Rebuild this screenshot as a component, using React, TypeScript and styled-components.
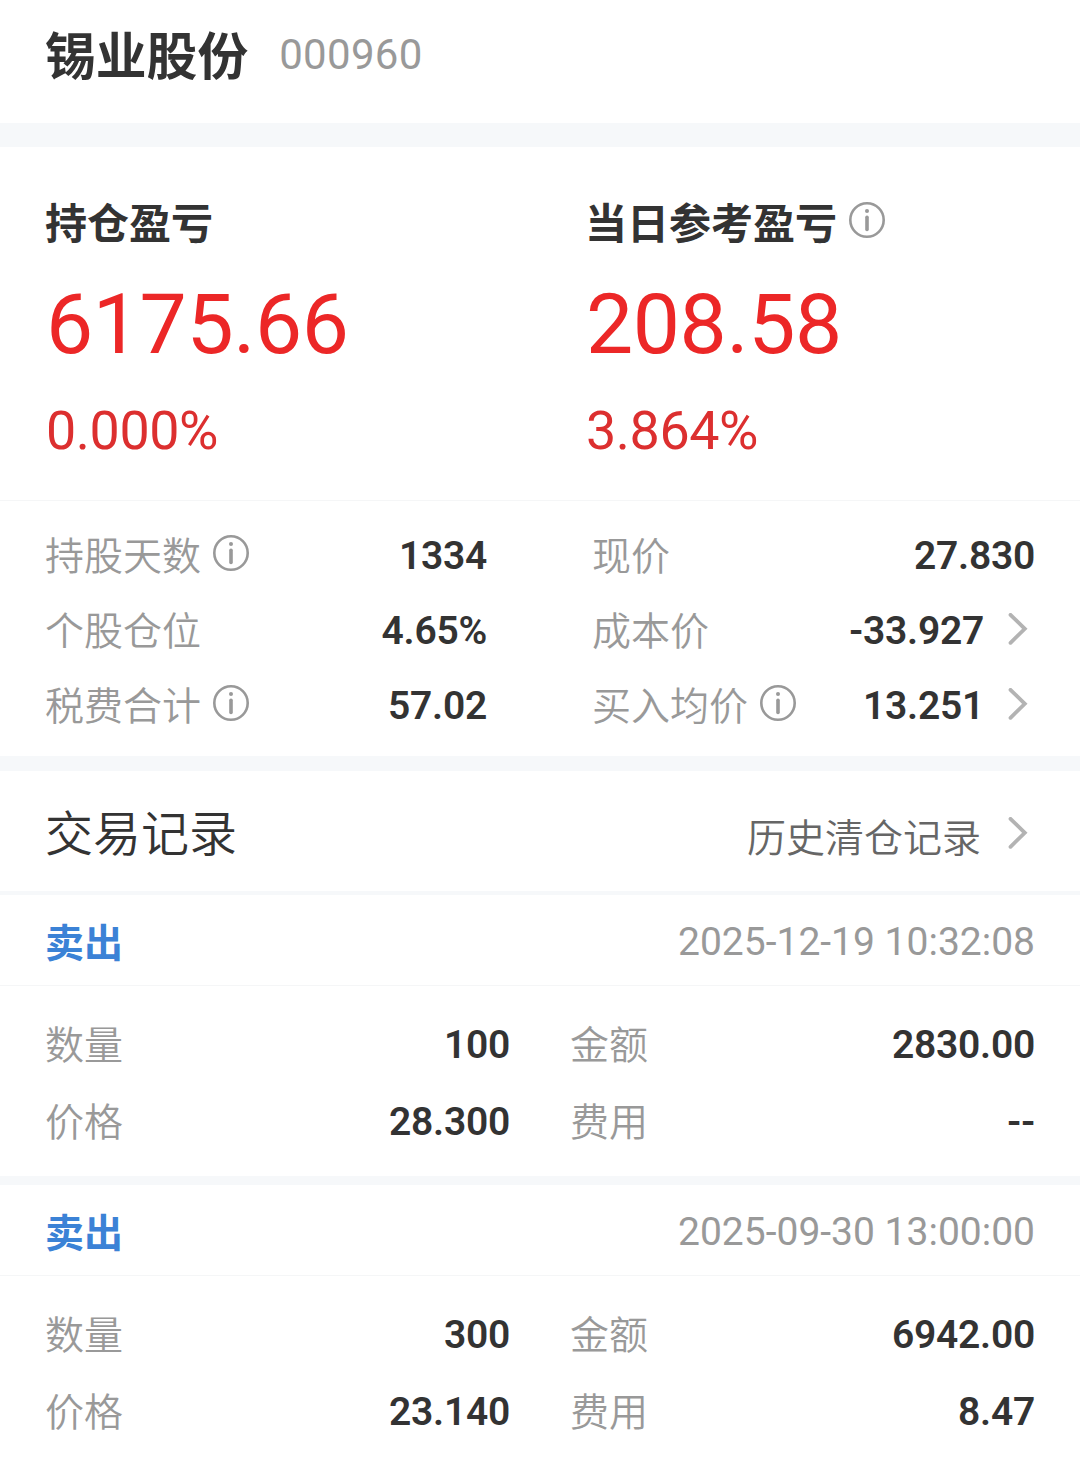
import React from 'react';
import styled, { createGlobalStyle } from 'styled-components';

const Global = createGlobalStyle`
  * { box-sizing: border-box; }
  body { margin: 0; background: #fff; font-family: Roboto, "Noto Sans CJK SC", sans-serif; color: #333; }
`;
const Page = styled.main`width: 1080px; height: 1464px; background: #fff; overflow: hidden;`;
const Header = styled.header`
  height: 123px; padding: 0 45px; display: flex; align-items: flex-start; gap: 31px;
`;
const StockName = styled.h1`margin: 0; padding-top: 3px; font-size: 50.8px; font-weight: 700; line-height: 110px; white-space: nowrap;`;
const StockCode = styled.span`font-size: 42px; line-height: 110px; color: #999; letter-spacing: 0.3px;`;
const Band = styled.div<{ $h: number }>`height: ${p => p.$h}px; background: #f6f8fa;`;
const Summary = styled.section`height: 354px; display: grid; grid-template-columns: 540px 540px; border-bottom: 1px solid #f5f6f7;`;
const Profit = styled.div`padding: 43px 45px 0; display: flex; flex-direction: column;`;
const ProfitTitle = styled.h2`margin: 0; height: 60px; display: flex; align-items: center; gap: 12px; font-size: 42px; font-weight: 700; white-space: nowrap;`;
const Amount = styled.div`height: 96px; margin-top: 27px; padding-left: 1px; font-size: 84px; line-height: 96px; letter-spacing: -0.4px; color: #ec2727;`;
const Percent = styled.div`height: 64px; margin-top: 26px; padding-left: 1px; font-size: 53.8px; line-height: 64px; letter-spacing: -0.4px; color: #dc2f2f;`;
const Details = styled.section`height: 255px; padding: 17px 45px 13px; display: grid; grid-template-columns: 442px 443px; column-gap: 105px; grid-template-rows: repeat(3, 75px);`;
const Row = styled.div`display: flex; align-items: center; justify-content: space-between;`;
const Label = styled.span`display: flex; align-items: center; gap: 12px; padding-bottom: 5px; font-size: 39px; font-weight: 350; color: #999; white-space: nowrap;`;
const Value = styled.span`display: flex; align-items: center; font-size: 39px; font-weight: 600; letter-spacing: -0.25px; white-space: nowrap;`;
const RecordsHeader = styled.section`height: 120px; padding: 0 45px; display: flex; align-items: center; justify-content: space-between;`;
const RecordsTitle = styled.h2`margin: 0; padding-bottom: 3px; font-size: 48px; font-weight: 350;`;
const History = styled.span`display: flex; align-items: center; padding-top: 7px; font-size: 39px; font-weight: 350; color: #666;`;
const TradeHead = styled.div`height: 91px; padding: 0 45px; display: flex; align-items: center; justify-content: space-between; border-bottom: 1px solid #f5f6f7;`;
const Side = styled.span`font-size: 39px; font-weight: 700; color: #3b82d6;`;
const Time = styled.time`padding-top: 3px; font-size: 39px; color: #999;`;
const TradeBody = styled.div`height: 190px; padding: 20px 45px 16px; display: grid; grid-template-columns: 465px 465px; column-gap: 60px; grid-template-rows: 77px 77px;`;
const ChevronIcon = styled.svg<{ $gap: number }>`flex: none; margin-left: ${p => p.$gap}px;`;

const Info = () => (
  <svg width="36" height="36" viewBox="0 0 36 36" fill="none" stroke="#999">
    <circle cx="18" cy="18" r="16.7" strokeWidth="2.6" />
    <path d="M18 15.2V27.4" strokeWidth="3.6" strokeLinecap="round" />
    <circle cx="18" cy="9" r="2" fill="#999" stroke="none" />
  </svg>
);
const Chevron = ({ gap = 24 }: { gap?: number }) => (
  <ChevronIcon $gap={gap} width="27" height="36" viewBox="0 0 27 36" fill="none" stroke="#b3b3b3" strokeWidth="3.8" strokeLinecap="round"><path d="M2.5 1.8L16.8 15.8L2.5 29.8" /></ChevronIcon>
);

const details = [
  { label: '持股天数', value: '1334', info: true },
  { label: '现价', value: '27.830' },
  { label: '个股仓位', value: '4.65%' },
  { label: '成本价', value: '-33.927', link: true },
  { label: '税费合计', value: '57.02', info: true },
  { label: '买入均价', value: '13.251', info: true, link: true },
];
const trades = [
  { time: '2025-12-19 10:32:08', fields: [['数量', '100'], ['金额', '2830.00'], ['价格', '28.300'], ['费用', '--']] },
  { time: '2025-09-30 13:00:00', fields: [['数量', '300'], ['金额', '6942.00'], ['价格', '23.140'], ['费用', '8.47']] },
];

export default function App() {
  return (
    <Page>
      <Global />
      <Header><StockName>锡业股份</StockName><StockCode>000960</StockCode></Header>
      <Band $h={24} />
      <Summary>
        <Profit><ProfitTitle>持仓盈亏</ProfitTitle><Amount>6175.66</Amount><Percent>0.000%</Percent></Profit>
        <Profit><ProfitTitle>当日参考盈亏<Info /></ProfitTitle><Amount>208.58</Amount><Percent>3.864%</Percent></Profit>
      </Summary>
      <Details>
        {details.map(d => (
          <Row key={d.label}><Label>{d.label}{d.info && <Info />}</Label><Value>{d.value}{d.link && <Chevron />}</Value></Row>
        ))}
      </Details>
      <Band $h={15} />
      <RecordsHeader><RecordsTitle>交易记录</RecordsTitle><History>历史清仓记录<Chevron gap={27} /></History></RecordsHeader>
      {trades.map((t, i) => (
        <React.Fragment key={t.time}>
          <Band $h={i ? 9 : 4} />
          <TradeHead><Side>卖出</Side><Time>{t.time}</Time></TradeHead>
          <TradeBody>{t.fields.map(([l, v]) => <Row key={l}><Label>{l}</Label><Value>{v}</Value></Row>)}</TradeBody>
        </React.Fragment>
      ))}
    </Page>
  );
}
